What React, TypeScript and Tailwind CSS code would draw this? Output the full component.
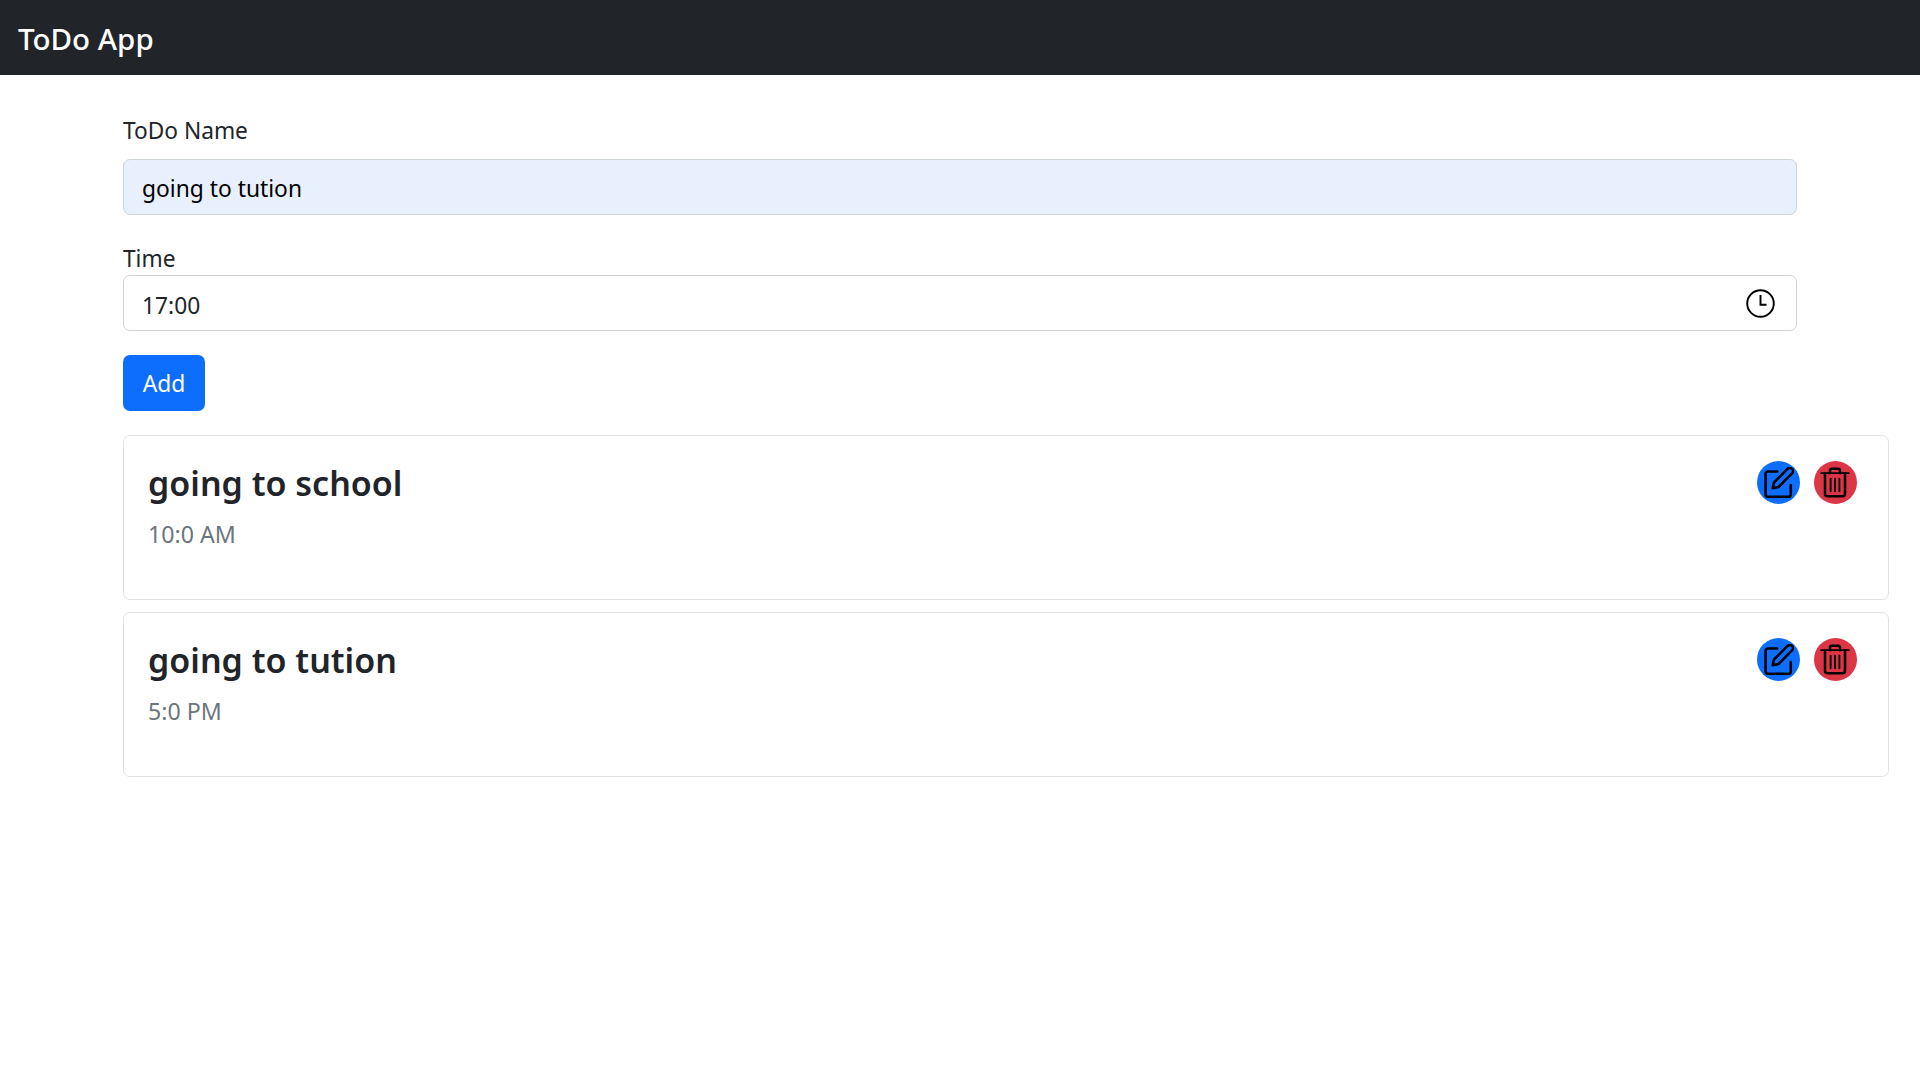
const todos = [
  { id: 1, name: "going to school", time: "10:0 AM" },
  { id: 2, name: "going to tution", time: "5:0 PM" },
];

function ClockIcon() {
  return (
    <svg width="29" height="29" viewBox="0 0 24 24" fill="none" stroke="#000" strokeWidth="1.6">
      <circle cx="12" cy="12" r="11" />
      <path d="M12 5v8h5" />
    </svg>
  );
}

function EditIcon() {
  return (
    <svg width="31" height="31" viewBox="0 0 24 24" fill="none" stroke="#000" strokeWidth="2" strokeLinecap="round" strokeLinejoin="round">
      <path d="M11 3.5H4a2 2 0 0 0-2 2V21a2 2 0 0 0 2 2h15.5a2 2 0 0 0 2-2v-7" />
      <path d="M19 1.5a2.1 2.1 0 0 1 3.5 3.5L12 15.5l-4.5 1 1-4.5L19 1.5z" />
    </svg>
  );
}

function TrashIcon() {
  return (
    <svg width="30" height="31" viewBox="0 0 24 24" fill="none" stroke="#000" strokeWidth="2" strokeLinecap="round" strokeLinejoin="round">
      <path d="M1 4.5h22" strokeWidth="1.5" />
      <path d="M4 4.5V21a2 2 0 0 0 2 2h12a2 2 0 0 0 2-2V4.5" />
      <path d="M8 4.5V2.5a1.5 1.5 0 0 1 1.5-1.5h5A1.5 1.5 0 0 1 16 2.500v2" />
      <path d="M8.500 9v10M12 9v10M15.500 9v10" strokeWidth="1.5" />
    </svg>
  );
}

export default function App() {
  return (
    <div className="min-h-screen bg-white font-['Noto_Sans','Open_Sans',sans-serif] text-[#212529]">
      {/* Navbar */}
      <nav className="h-[75px] bg-[#212529] flex items-center px-[18px] pt-[3px]">
        <span className="text-[29.5px] font-medium text-white">ToDo App</span>
      </nav>

      <div className="pl-[123px] pr-[31px]">
        {/* Form */}
        <div className="w-[1674px] pt-[41px]">
          <label className="block text-[22.7px] leading-[30px] mb-[13px]">ToDo Name</label>
          <div className="h-[56px] flex items-center px-[18px] pt-[4px] border border-[#ced4da] rounded-[7px] bg-[#e8f0fe] text-[22.8px] text-black">
            going to tution
          </div>
          <label className="block text-[22.7px] leading-[30px] mt-[29px] mb-[1px]">Time</label>
          <div className="h-[56px] flex items-center justify-between pl-[18px] pr-[21px] border border-[#ced4da] rounded-[7px] text-[22.8px] bg-white">
            <span className="pt-[6px]">17:00</span>
            <ClockIcon />
          </div>
          <button className="block mt-[24px] w-[82px] h-[56px] pt-[3px] bg-[#0d6efd] text-white text-[22.8px] rounded-[7px]">Add</button>
        </div>

        {/* Todo list */}
        <div className="mt-[24px] flex flex-col gap-[12px]">
          {todos.map((todo) => (
            <div key={todo.id} className="h-[165px] border border-[#dfe2e5] rounded-[7px] pl-[24px] pr-[31px] pt-[26px] flex justify-between items-start">
              <div>
                <h5 className="text-[34px] leading-[42px] font-semibold">{todo.name}</h5>
                <p className="text-[23.2px] leading-[30px] mt-[15px] text-[#6c757d]">{todo.time}</p>
              </div>
              <div className="flex gap-[13.5px] -mt-[1.5px]">
                <button className="w-[43.5px] h-[43.5px] rounded-full bg-[#0d6efd] flex items-center justify-center">
                  <EditIcon />
                </button>
                <button className="w-[43.5px] h-[43.5px] rounded-full bg-[#dc3545] flex items-center justify-center">
                  <TrashIcon />
                </button>
              </div>
            </div>
          ))}
        </div>
      </div>
    </div>
  );
}
